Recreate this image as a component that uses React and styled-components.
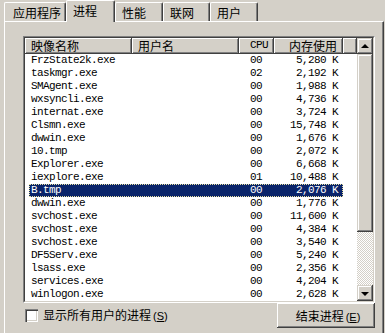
import styled, { createGlobalStyle, css } from 'styled-components';

const GlobalStyle = createGlobalStyle`
  html, body {
    margin: 0;
    padding: 0;
    background: #d4d0c8;
  }
  body {
    font-family: "Noto Sans CJK SC", "Noto Sans", sans-serif;
    font-size: 12px;
    color: #000;
  }
`;

const raised = css`
  background: #d4d0c8;
  box-shadow: inset -1px -1px #404040, inset 1px 1px #fff, inset -2px -2px #808080;
`;

const Window = styled.div`
  width: 385px;
  height: 333px;
  overflow: hidden;
  padding-left: 4px;
  box-sizing: border-box;
`;

const TabStrip = styled.div`
  display: flex;
  align-items: flex-end;
  height: 21px;
`;

const Tab = styled.div`
  box-sizing: border-box;
  width: ${({ $width }) => $width}px;
  height: 19px;
  padding: 3px 0 0 6px;
  line-height: 14px;
  white-space: nowrap;
  background: #d4d0c8;
  border-top: 1px solid #fff;
  border-left: 1px solid #fff;
  border-right: 1px solid #404040;
  box-shadow: inset -1px 0 #808080;
  border-radius: 2px 2px 0 0;

  &:first-child {
    padding-left: 8px;
  }

  ${({ $active }) => $active && css`
    height: 22px;
    margin-bottom: -1px;
    padding-top: 3px;
    position: relative;
    z-index: 1;
  `}
`;

const Panel = styled.div`
  width: 380px;
  box-sizing: border-box;
  height: 320px;
  border-top: 1px solid #fff;
  border-left: 1px solid #fff;
  border-right: 1px solid #404040;
  box-shadow: inset -1px 0 #808080;
  padding: 14px 6px 0 18px;
  display: flex;
  flex-direction: column;
`;

const ListView = styled.div`
  width: 352px;
  height: 267px;
  box-sizing: border-box;
  border: 1px solid;
  border-color: #808080 #fff #fff #808080;
  display: flex;
  background: #fff;
`;

const ListInner = styled.div`
  flex: 1;
  display: flex;
  border: 1px solid;
  border-color: #404040 #d4d0c8 #d4d0c8 #404040;
  min-width: 0;
`;

const ListMain = styled.div`
  flex: 1;
  display: flex;
  flex-direction: column;
  overflow: hidden;
`;

const Header = styled.div`
  display: flex;
  height: 16px;
  flex-shrink: 0;
`;

const HeaderCell = styled.div`
  ${raised}
  box-sizing: border-box;
  width: ${({ $width }) => ($width ? `${$width}px` : 'auto')};
  flex: ${({ $width }) => ($width ? 'none' : '1')};
  height: 16px;
  line-height: 15px;
  padding: 0 ${({ $right }) => ($right ? '6px' : '0')} 0 ${({ $pad }) => $pad ?? 6}px;
  text-align: ${({ $right }) => ($right ? 'right' : 'left')};
  white-space: nowrap;
  font-family: ${({ $mono }) => ($mono ? '"Liberation Mono", monospace' : 'inherit')};
  font-size: ${({ $mono }) => ($mono ? '11px' : '12px')};
  letter-spacing: ${({ $mono }) => ($mono ? '-0.6px' : '0')};
`;

const Rows = styled.div`
  padding-left: 4px;
`;

const Row = styled.div`
  display: flex;
  width: 314px;
  height: 13px;
  line-height: 13px;
  font-family: "Liberation Mono", monospace;
  font-size: 11px;
  letter-spacing: -0.6px;
  white-space: nowrap;
  color: #000;

  ${({ $selected }) => $selected && css`
    background: #0a246a;
    color: #fff;
    outline: 1px dotted #e8e0a0;
    outline-offset: -1px;
  `}
`;

const Cell = styled.div`
  box-sizing: border-box;
  width: ${({ $width }) => $width}px;
  padding-left: ${({ $pad }) => $pad ?? 0}px;
  padding-right: ${({ $right }) => ($right ? 5 : 0)}px;
  text-align: ${({ $right }) => ($right ? 'right' : 'left')};
  overflow: hidden;
`;

const ScrollBar = styled.div`
  width: 16px;
  display: flex;
  flex-direction: column;
  flex-shrink: 0;
`;

const ScrollButton = styled.div`
  ${raised}
  box-shadow: inset -1px -1px #404040, inset 1px 1px #d4d0c8, inset -2px -2px #808080, inset 2px 2px #fff;
  width: 16px;
  height: 16px;
  display: flex;
  align-items: center;
  justify-content: center;
  flex-shrink: 0;
`;

const Arrow = styled.span`
  width: 0;
  height: 0;
  border-left: 4px solid transparent;
  border-right: 4px solid transparent;
  ${({ $down }) => ($down
    ? css`border-top: 4px solid #000; margin-top: 1px;`
    : css`border-bottom: 4px solid #000; margin-top: -1px;`)}
`;

const Thumb = styled.div`
  ${raised}
  box-shadow: inset -1px -1px #404040, inset 1px 1px #d4d0c8, inset -2px -2px #808080, inset 2px 2px #fff;
  height: 178px;
  flex-shrink: 0;
`;

const Track = styled.div`
  flex: 1;
  background-color: #fff;
  background-image: repeating-conic-gradient(#d4d0c8 0 25%, #fff 0 50%);
  background-size: 2px 2px;
`;

const BottomBar = styled.div`
  width: 352px;
  display: flex;
  align-items: center;
  justify-content: space-between;
`;

const CheckLabel = styled.label`
  display: flex;
  align-items: center;
  gap: 5px;
  padding-left: 2px;
  line-height: 14px;
`;

const CheckBox = styled.span`
  width: 13px;
  height: 13px;
  box-sizing: border-box;
  background: #fff;
  box-shadow: inset 1px 1px #808080, inset 2px 2px #404040, inset -1px -1px #fff, inset -2px -2px #d4d0c8;
`;

const Button = styled.button`
  ${raised}
  box-shadow: inset -1px -1px #404040, inset 1px 1px #fff, inset -2px -2px #808080, inset 2px 2px #d4d0c8;
  width: 98px;
  height: 25px;
  border: none;
  padding: 0 0 0 4px;
  font-family: "Noto Sans CJK SC", "Noto Sans", sans-serif;
  font-size: 12px;
  color: #000;
`;

const Mnemonic = styled.span`
  font-family: "Liberation Sans", sans-serif;
  font-size: 11px;
  margin-left: 2px;

  u {
    text-underline-offset: 1px;
  }
`;

const tabs = [
  { label: '应用程序', width: 62 },
  { label: '进程', width: 49, active: true },
  { label: '性能', width: 48 },
  { label: '联网', width: 47 },
  { label: '用户', width: 48 },
];

const processes = [
  ['FrzState2k.exe', '00', '5,280 K'],
  ['taskmgr.exe', '02', '2,192 K'],
  ['SMAgent.exe', '00', '1,988 K'],
  ['wxsyncli.exe', '00', '4,736 K'],
  ['internat.exe', '00', '3,724 K'],
  ['Clsmn.exe', '00', '15,748 K'],
  ['dwwin.exe', '00', '1,676 K'],
  ['10.tmp', '00', '2,072 K'],
  ['Explorer.exe', '00', '6,668 K'],
  ['iexplore.exe', '01', '10,488 K'],
  ['B.tmp', '00', '2,076 K'],
  ['dwwin.exe', '00', '1,776 K'],
  ['svchost.exe', '00', '11,600 K'],
  ['svchost.exe', '00', '4,384 K'],
  ['svchost.exe', '00', '3,540 K'],
  ['DF5Serv.exe', '00', '5,240 K'],
  ['lsass.exe', '00', '2,356 K'],
  ['services.exe', '00', '4,204 K'],
  ['winlogon.exe', '00', '2,628 K'],
];

export default function App() {
  return (
    <Window>
      <GlobalStyle />
      <TabStrip>
        {tabs.map((t) => (
          <Tab key={t.label} $width={t.width} $active={t.active}>{t.label}</Tab>
        ))}
      </TabStrip>
      <Panel>
        <ListView>
          <ListInner>
            <ListMain>
              <Header>
                <HeaderCell $width={107}>映像名称</HeaderCell>
                <HeaderCell $width={107}>用户名</HeaderCell>
                <HeaderCell $width={35} $pad={11} $mono>CPU</HeaderCell>
                <HeaderCell $width={69} $right>内存使用</HeaderCell>
                <HeaderCell />
              </Header>
              <Rows>
                {processes.map(([name, cpu, mem], i) => (
                  <Row key={i} $selected={name === 'B.tmp'}>
                    <Cell $width={103} $pad={2}>{name}</Cell>
                    <Cell $width={107} />
                    <Cell $width={35} $pad={11}>{cpu}</Cell>
                    <Cell $width={69} $right>{mem}</Cell>
                  </Row>
                ))}
              </Rows>
            </ListMain>
            <ScrollBar>
              <ScrollButton><Arrow /></ScrollButton>
              <Thumb />
              <Track />
              <ScrollButton><Arrow $down /></ScrollButton>
            </ScrollBar>
          </ListInner>
        </ListView>
        <BottomBar>
          <CheckLabel>
            <CheckBox />
            <span>显示所有用户的进程<Mnemonic>(<u>S</u>)</Mnemonic></span>
          </CheckLabel>
          <Button>结束进程<Mnemonic>(<u>E</u>)</Mnemonic></Button>
        </BottomBar>
      </Panel>
    </Window>
  );
}
